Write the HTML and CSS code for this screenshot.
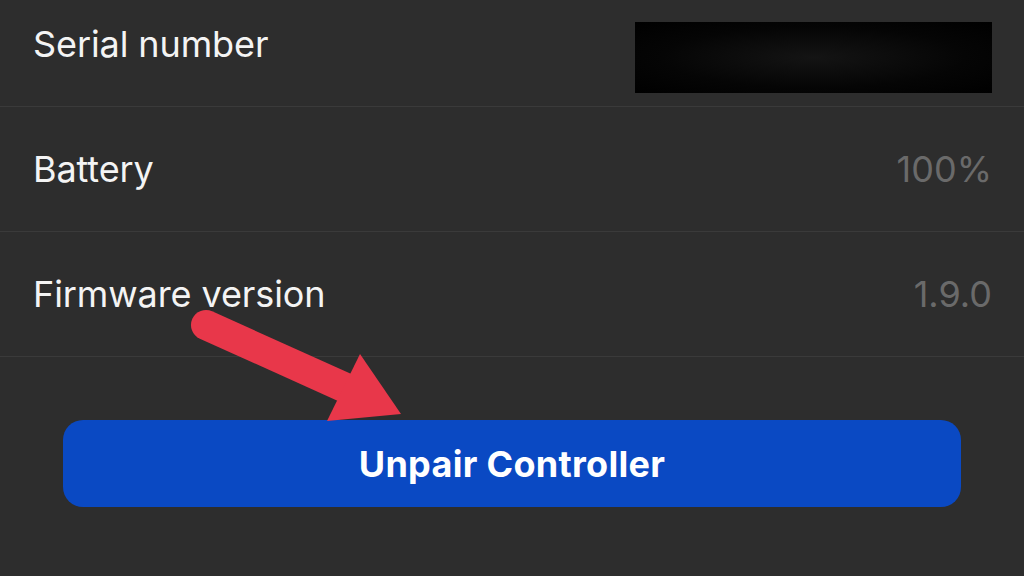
FILE: index.html
```html
<!DOCTYPE html>
<html lang="en">
<head>
<meta charset="utf-8">
<title>Controller</title>
<link rel="stylesheet" href="styles.css">
</head>
<body>
<main class="screen">
  <ul class="info-list">
    <li class="info-row">
      <span class="label">Serial number</span>
      <span class="redacted"></span>
    </li>
    <li class="info-row">
      <span class="label">Battery</span>
      <span class="value">100%</span>
    </li>
    <li class="info-row">
      <span class="label">Firmware version</span>
      <span class="value">1.9.0</span>
    </li>
  </ul>
  <div class="actions">
    <button class="unpair-btn" type="button">Unpair Controller</button>
  </div>
  <svg class="annotation" width="1024" height="576" viewBox="0 0 1024 576" aria-hidden="true">
    <line x1="206" y1="343" x2="348" y2="407" stroke="#e8374a" stroke-width="30" stroke-linecap="round"/>
    <polygon points="360,372 401,432 327,439" fill="#e8374a"/>
  </svg>
</main>
</body>
</html>
```

FILE: styles.css
```css
* { box-sizing: border-box; }
html, body {
  margin: 0;
  padding: 0;
  background: #2d2d2d;
}
body {
  width: 1024px;
  height: 576px;
  overflow: hidden;
  font-family: Inter, "Noto Sans", "Liberation Sans", sans-serif;
}
.screen {
  position: relative;
  width: 1024px;
  height: 576px;
}
.info-list {
  list-style: none;
  margin: -18px 0 0 0;
  padding: 0;
}
.info-row {
  height: 125px;
  display: flex;
  align-items: center;
  justify-content: space-between;
  padding: 0 32px 0 33px;
  border-bottom: 1px solid #3a3a3a;
}
.label {
  color: #f4f4f4;
  font-size: 36px;
  letter-spacing: -0.1px;
}
.value {
  color: #6a6a6a;
  font-size: 36px;
  letter-spacing: 0;
}
.redacted {
  width: 357px;
  height: 71px;
  background: radial-gradient(ellipse at center, #141414 0%, #050505 60%, #000 100%);
  transform: translateY(13px);
}
.actions {
  padding: 63px 63px 0 63px;
}
.unpair-btn {
  width: 100%;
  height: 87px;
  border: none;
  border-radius: 20px;
  background: #0a49c3;
  color: #ffffff;
  font-family: Inter, "Noto Sans", "Liberation Sans", sans-serif;
  font-size: 36px;
  font-weight: 700;
  letter-spacing: 0.3px;
  padding: 0;
}
.annotation {
  position: absolute;
  left: 0;
  top: 0;
  pointer-events: none;
}
```
